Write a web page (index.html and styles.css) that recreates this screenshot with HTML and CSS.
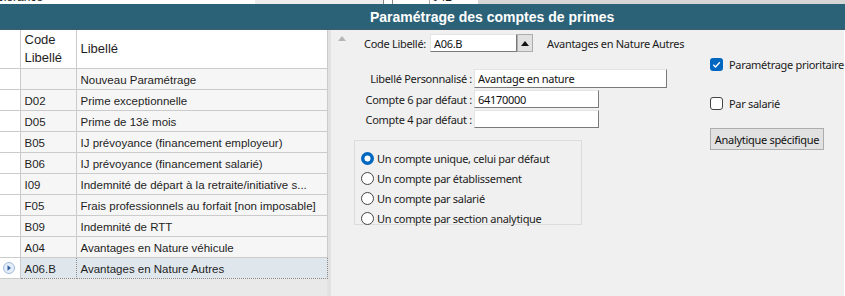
FILE: index.html
```html
<!DOCTYPE html>
<html lang="fr">
<head>
    <meta charset="UTF-8">
    <title>Paramétrage des comptes de primes</title>
    <link rel="stylesheet" href="styles.css">
</head>
<body>

<div class="backdrop">
    <span class="bd-label">olérance</span>
    <span class="bd-dots"></span>
    <span class="bd-cell"></span>
    <span class="bd-cell narrow"></span>
    <span class="bd-value">042</span>
    <span class="bd-rest"></span>
</div>

<div class="title-bar">Paramétrage des comptes de primes</div>

<div class="workspace">

    <div class="list-pane">
        <table class="grid">
            <colgroup>
                <col class="c-ind">
                <col class="c-code">
                <col class="c-lib">
            </colgroup>
            <tr class="head">
                <th class="ind"></th>
                <th>Code<br>Libellé</th>
                <th>Libellé</th>
            </tr>
            <tr><td class="ind"></td><td></td><td>Nouveau Paramétrage</td></tr>
            <tr><td class="ind"></td><td>D02</td><td>Prime exceptionnelle</td></tr>
            <tr><td class="ind"></td><td>D05</td><td>Prime de 13è mois</td></tr>
            <tr><td class="ind"></td><td>B05</td><td>IJ prévoyance (financement employeur)</td></tr>
            <tr><td class="ind"></td><td>B06</td><td>IJ prévoyance (financement salarié)</td></tr>
            <tr><td class="ind"></td><td>I09</td><td>Indemnité de départ à la retraite/initiative s...</td></tr>
            <tr><td class="ind"></td><td>F05</td><td>Frais professionnels au forfait [non imposable]</td></tr>
            <tr><td class="ind"></td><td>B09</td><td>Indemnité de RTT</td></tr>
            <tr><td class="ind"></td><td>A04</td><td>Avantages en Nature véhicule</td></tr>
            <tr class="current">
                <td class="ind">
                    <svg width="12" height="12" viewBox="0 0 12 12">
                        <circle cx="6" cy="6" r="5.5" fill="#e3eefa" stroke="#9fb8d6"/>
                        <path d="M4.5 3.2 L8 6 L4.5 8.8 Z" fill="#2f5e9c"/>
                    </svg>
                </td>
                <td>A06.B</td>
                <td>Avantages en Nature Autres</td>
            </tr>
        </table>
    </div>

    <div class="form-pane">
        <div class="main-col">
            <div class="row code-row">
                <span class="scroll-up"></span>
                <span class="code-label">Code Libellé:</span>
                <input class="field code-field" value="A06.B" readonly>
                <span class="spin"><span class="tri"></span></span>
                <span class="code-name">Avantages en Nature Autres</span>
            </div>

            <div class="row first">
                <span class="lbl">Libellé Personnalisé :</span>
                <input class="field wide" value="Avantage en nature" readonly>
            </div>
            <div class="row">
                <span class="lbl">Compte 6 par défaut :</span>
                <input class="field mid" value="64170000" readonly>
            </div>
            <div class="row">
                <span class="lbl">Compte 4 par défaut :</span>
                <input class="field mid" value="" readonly>
            </div>

            <div class="group">
                <div class="opt">
                    <svg width="13" height="13" viewBox="0 0 13 13"><circle cx="6.5" cy="6.5" r="6.5" fill="#0067c0"/><circle cx="6.5" cy="6.5" r="3" fill="#fff"/></svg>
                    Un compte unique, celui par défaut
                </div>
                <div class="opt">
                    <svg width="13" height="13" viewBox="0 0 13 13"><circle cx="6.5" cy="6.5" r="6" fill="#fff" stroke="#444"/></svg>
                    Un compte par établissement
                </div>
                <div class="opt">
                    <svg width="13" height="13" viewBox="0 0 13 13"><circle cx="6.5" cy="6.5" r="6" fill="#fff" stroke="#444"/></svg>
                    Un compte par salarié
                </div>
                <div class="opt">
                    <svg width="13" height="13" viewBox="0 0 13 13"><circle cx="6.5" cy="6.5" r="6" fill="#fff" stroke="#444"/></svg>
                    Un compte par section analytique
                </div>
            </div>
        </div>

        <div class="side-col">
            <div class="check top">
                <svg width="13" height="13" viewBox="0 0 13 13"><rect width="13" height="13" rx="3" fill="#0067c0"/><path d="M3.3 6.8 L5.5 9 L9.8 4.2" fill="none" stroke="#fff" stroke-width="1.3"/></svg>
                Paramétrage prioritaire
            </div>
            <div class="check">
                <svg width="13" height="13" viewBox="0 0 13 13"><rect x="0.5" y="0.5" width="12" height="12" rx="2.5" fill="#fff" stroke="#444"/></svg>
                Par salarié
            </div>
            <button class="btn">Analytique spécifique</button>
        </div>
    </div>

</div>

</body>
</html>
```

FILE: styles.css
```css
body{
    margin: 0;
    width: 845px;
    height: 296px;
    overflow: hidden;
    background-color: #fff;
    font-family: "Noto Sans", sans-serif;
    font-size: 11px;
    color: #1b1b1b;
}

/* strip of the window behind */
.backdrop{
    height: 4px;
    overflow: hidden;
    display: flex;
    font-family: "Liberation Sans", sans-serif;
    font-size: 12px;
    line-height: 12px;
    background-color: #fff;
}
.backdrop span{ margin-top: -9px; height: 14px; }
.bd-label{ width: 258px; margin-left: -3px; }
.bd-dots{ width: 128px; background-color: #ededed; }
.bd-cell{ width: 8px; border-left: 1px solid #888; }
.bd-cell.narrow{ width: 36px; }
.bd-value{ width: 46px; padding-left: 2px; border-left: 1px solid #aaa; }
.bd-rest{ flex: 1; background-color: #d6d6d6; }

.title-bar{
    height: 25px;
    background-color: #2c6277;
    color: #fff;
    font-family: "Liberation Sans", sans-serif;
    font-weight: bold;
    font-size: 14px;
    display: flex;
    align-items: center;
    padding-left: 370px;
    border-bottom: 1px solid #3c5f6e;
}

.workspace{
    display: flex;
    height: 266px;
    border-right: 1px solid #8c8c8c;
    width: 842px;
}

/* left list */
.list-pane{
    width: 327px;
    background-color: #e9e9e9;
    border-right: 4px solid #e2e2e2;
}
.grid{
    border-collapse: collapse;
    width: 327px;
    table-layout: fixed;
    font-family: "Liberation Sans", sans-serif;
    font-size: 11.5px;
    color: #1e1e1e;
}
.c-ind{ width: 20px; }
.c-code{ width: 56px; }
.c-lib{ width: 251px; }

.grid th, .grid td{
    border: 1px solid #cbcbcb;
    padding: 0 0 0 4px;
    text-align: left;
    white-space: nowrap;
    overflow: hidden;
}
.grid th{
    height: 38px;
    background-color: #fff;
    font-weight: normal;
    font-size: 13px;
    line-height: 18px;
}
.grid td{
    height: 19px;
    padding-top: 1px;
    background-color: #f6f6f6;
}
.grid .ind{
    border-left: none;
    background-color: #fff;
    padding: 0;
}
.grid tr:first-child th{ border-top: none; }
.grid .current td{
    background-color: #dfe7ed;
    border: 1px dotted #8a8a8a;
}
.grid .current td.ind{
    background-color: #fff;
    border: 1px solid #cbcbcb;
    border-left: none;
    padding-left: 3px;
}
.grid .current svg{ display: block; }

/* form */
.form-pane{
    flex: 1;
    display: grid;
    grid-template-columns: 379px 1fr;
    background-color: #f0f0f0;
    white-space: nowrap;
    letter-spacing: -0.3px;
}
.row{
    display: flex;
    align-items: center;
    margin-top: 2px;
}
.row.first{ margin-top: 17px; }
.code-row{ margin-top: 4px; height: 18px; }
.scroll-up{
    align-self: flex-start;
    margin: 2px 0 0 7px;
    width: 0;
    height: 0;
    border-left: 4px solid transparent;
    border-right: 4px solid transparent;
    border-bottom: 5px solid #b5b5b5;
}
.code-label{ margin-left: 18px; width: 66px; }
.code-name{ margin-left: 14px; }
.spin{
    width: 14px;
    height: 16px;
    background-color: #e1e1e1;
    border: 1px solid #adadad;
    display: flex;
    align-items: center;
    justify-content: center;
}
.tri{
    width: 0;
    height: 0;
    border-left: 4px solid transparent;
    border-right: 4px solid transparent;
    border-bottom: 5px solid #111;
}
.lbl{
    width: 141px;
    text-align: right;
    margin-right: 2px;
}
.field{
    box-sizing: border-box;
    height: 19px;
    padding: 0 3px;
    font-family: "Noto Sans", sans-serif;
    font-size: 11px;
    letter-spacing: -0.3px;
    color: #111;
    background-color: #fff;
    border: 1px solid;
    border-color: #e4e4e4 #7a7a7a #7a7a7a #e4e4e4;
    outline: none;
}
.code-field{ width: 87px; height: 18px; }
.wide{ width: 193px; }
.mid{ width: 125px; height: 18px; }

.group{
    margin: 12px 0 0 23px;
    width: 228px;
    height: 85px;
    box-sizing: border-box;
    border: 1px solid #dcdcdc;
    padding: 7px 0 0 6px;
}
.opt{
    display: flex;
    align-items: center;
    gap: 3px;
    height: 20px;
}

.side-col{
    display: flex;
    flex-direction: column;
    align-items: flex-start;
}
.check{
    display: flex;
    align-items: center;
    gap: 6px;
}
.check.top{ margin-top: 27px; }
.check + .check{ margin-top: 24px; }
.btn{
    margin-top: 17px;
    width: 114px;
    height: 22px;
    padding: 0;
    background-color: #e1e1e1;
    border: 1px solid #adadad;
    font-family: "Noto Sans", sans-serif;
    font-size: 11px;
    letter-spacing: -0.3px;
    color: #111;
}
```
